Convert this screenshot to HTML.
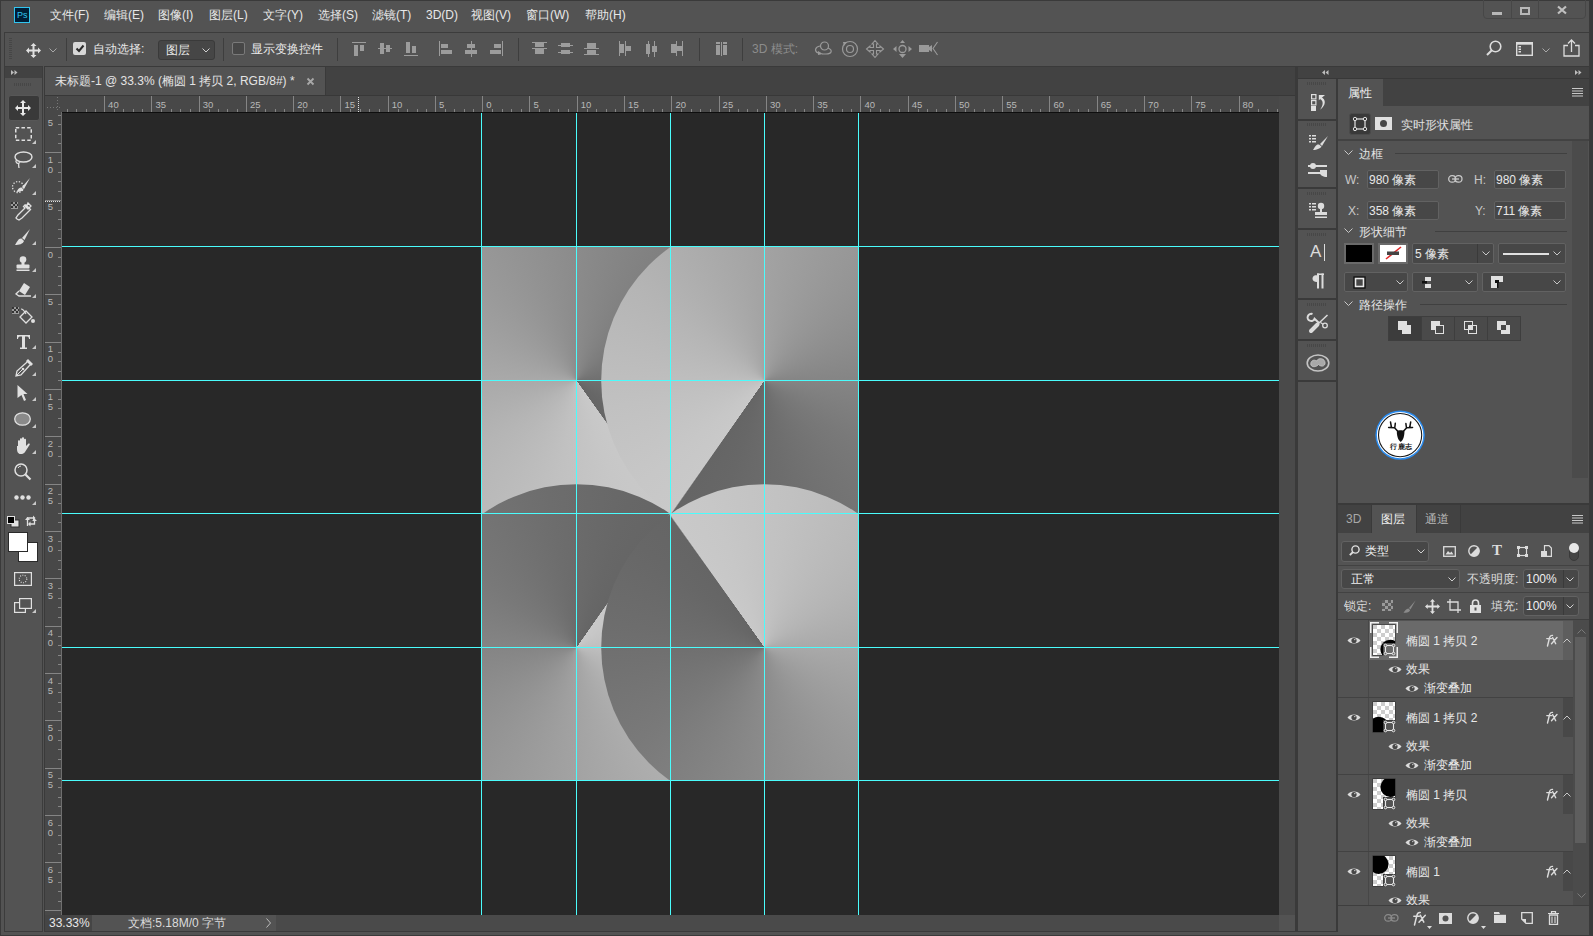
<!DOCTYPE html>
<html><head><meta charset="utf-8">
<style>
*{margin:0;padding:0;box-sizing:border-box}
html,body{width:1593px;height:936px;overflow:hidden;background:#535353}
body{font-family:"Liberation Sans",sans-serif;font-size:12px;color:#e8e8e8;position:relative}
.a{position:absolute}
.t{position:absolute;white-space:nowrap;line-height:14px}
svg{position:absolute;overflow:visible}
.ic{fill:#9c9c9c}
.sep{position:absolute;width:1px;background:#3e3e3e}
.rl{position:absolute;font-size:9.5px;color:#b8b8b8;line-height:10px;white-space:nowrap}
.vr{position:absolute;font-size:9.5px;color:#b8b8b8;line-height:10px;width:7px;text-align:center}
.tk{position:absolute;background:#858585}
.gd{position:absolute;background:#4afcfc}
.inp{position:absolute;background:#474747;border:1px solid #626262;border-radius:2px}
.lbl{position:absolute;white-space:nowrap;line-height:14px;color:#dcdcdc}
</style></head><body>
<!-- window frame -->
<div class="a" style="left:0;top:0;width:1593px;height:936px;background:#535353;border:1px solid #3a3a3a;border-right:4px solid #3a3a3a"></div>

<!-- MENU BAR -->
<div class="a" style="left:14px;top:7px;width:16px;height:16px;background:#001e36;border:1px solid #31c5f0"></div>
<div class="t" style="left:17px;top:8px;font-size:9px;color:#31c5f0">Ps</div>
<div class="t" style="left:50px;top:8px">文件(F)</div>
<div class="t" style="left:104px;top:8px">编辑(E)</div>
<div class="t" style="left:158px;top:8px">图像(I)</div>
<div class="t" style="left:209px;top:8px">图层(L)</div>
<div class="t" style="left:263px;top:8px">文字(Y)</div>
<div class="t" style="left:318px;top:8px">选择(S)</div>
<div class="t" style="left:372px;top:8px">滤镜(T)</div>
<div class="t" style="left:426px;top:8px">3D(D)</div>
<div class="t" style="left:471px;top:8px">视图(V)</div>
<div class="t" style="left:526px;top:8px">窗口(W)</div>
<div class="t" style="left:585px;top:8px">帮助(H)</div>
<!-- window controls -->
<div class="a" style="left:1483px;top:-1px;width:103px;height:20px;border:1px solid #474747;border-radius:0 0 4px 4px"></div>
<div class="a" style="left:1511px;top:0;width:1px;height:18px;background:#474747"></div>
<div class="a" style="left:1538px;top:0;width:1px;height:18px;background:#474747"></div>
<div class="a" style="left:1492px;top:12px;width:10px;height:3px;background:#b8b8b8"></div>
<div class="a" style="left:1520px;top:7px;width:10px;height:8px;border:2px solid #b8b8b8"></div>
<svg style="left:1557px;top:6px" width="10" height="8"><path d="M1 0.5 L9 7.5 M9 0.5 L1 7.5" stroke="#c0c0c0" stroke-width="2.2"/></svg>

<!-- OPTIONS BAR -->
<div class="a" style="left:4px;top:32px;width:1585px;height:34px;background:#535353;border-top:1px solid #3c3c3c;border-left:1px solid #3c3c3c"></div>
<div class="a" style="left:9px;top:38px;width:3px;height:21px;background:repeating-linear-gradient(#464646 0 1px,transparent 1px 2px)"></div>
<svg style="left:26px;top:43px" width="15" height="15"><path d="M7.5 0 L10.5 3 H8.5 V6.5 H12 V4.5 L15 7.5 L12 10.5 V8.5 H8.5 V12 H10.5 L7.5 15 L4.5 12 H6.5 V8.5 H3 V10.5 L0 7.5 L3 4.5 V6.5 H6.5 V3 H4.5 Z" fill="#e0e0e0"/></svg>
<svg style="left:49px;top:48px" width="8" height="5"><path d="M0.5 0.5 L4 4 L7.5 0.5" stroke="#a8a8a8" fill="none"/></svg>
<div class="sep" style="left:66px;top:38px;height:23px"></div>
<div class="a" style="left:73px;top:42px;width:13px;height:13px;background:#d8d8d8;border-radius:2px"></div>
<svg style="left:75px;top:44px" width="10" height="9"><path d="M1.5 4.5 L4 7 L8.5 1.5" stroke="#2a2a2a" stroke-width="2" fill="none"/></svg>
<div class="t" style="left:93px;top:42px">自动选择:</div>
<div class="a" style="left:158px;top:40px;width:57px;height:20px;background:#464646;border:1px solid #3a3a3a;border-radius:3px"></div>
<div class="t" style="left:166px;top:43px">图层</div>
<svg style="left:202px;top:48px" width="8" height="5"><path d="M0.5 0.5 L4 4 L7.5 0.5" stroke="#d0d0d0" fill="none"/></svg>
<div class="sep" style="left:223px;top:38px;height:23px"></div>
<div class="a" style="left:232px;top:42px;width:13px;height:13px;background:#474747;border:1px solid #7a7a7a;border-radius:2px"></div>
<div class="t" style="left:251px;top:42px">显示变换控件</div>
<div class="sep" style="left:337px;top:38px;height:23px"></div>
<!-- align icons -->
<svg style="left:352px;top:42px" width="14" height="14"><rect x="0" y="0" width="14" height="1" class="ic"/><rect x="2" y="3" width="4" height="11" class="ic"/><rect x="8" y="3" width="4" height="6" class="ic"/></svg>
<svg style="left:378px;top:42px" width="14" height="14"><rect x="0" y="6" width="14" height="1" class="ic"/><rect x="2" y="1" width="4" height="11" class="ic"/><rect x="8" y="3" width="4" height="7" class="ic"/></svg>
<svg style="left:404px;top:42px" width="14" height="14"><rect x="0" y="13" width="14" height="1" class="ic"/><rect x="2" y="0" width="4" height="11" class="ic"/><rect x="8" y="4" width="4" height="7" class="ic"/></svg>
<svg style="left:439px;top:41px" width="14" height="15"><rect x="0" y="0" width="1" height="15" class="ic"/><rect x="2" y="3" width="7" height="4" class="ic"/><rect x="2" y="9" width="11" height="4" class="ic"/></svg>
<svg style="left:465px;top:41px" width="14" height="16"><rect x="6" y="0" width="1" height="16" class="ic"/><rect x="2" y="3" width="8" height="4" class="ic"/><rect x="0" y="9" width="12" height="4" class="ic"/></svg>
<svg style="left:490px;top:41px" width="14" height="15"><rect x="12" y="0" width="1" height="15" class="ic"/><rect x="4" y="3" width="7" height="4" class="ic"/><rect x="0" y="9" width="11" height="4" class="ic"/></svg>
<div class="sep" style="left:518px;top:38px;height:23px"></div>
<svg style="left:532px;top:42px" width="16" height="14"><rect x="0" y="0" width="15" height="1" class="ic"/><rect x="3" y="1" width="9" height="4" class="ic"/><rect x="0" y="6" width="15" height="1" class="ic"/><rect x="3" y="7" width="9" height="5" class="ic"/></svg>
<svg style="left:558px;top:42px" width="16" height="14"><rect x="3" y="1" width="9" height="4" class="ic"/><rect x="0" y="3" width="15" height="1" class="ic"/><rect x="3" y="8" width="9" height="4" class="ic"/><rect x="0" y="10" width="15" height="1" class="ic"/></svg>
<svg style="left:584px;top:42px" width="16" height="14"><rect x="3" y="1" width="9" height="5" class="ic"/><rect x="0" y="6" width="15" height="1" class="ic"/><rect x="3" y="8" width="9" height="4" class="ic"/><rect x="0" y="12" width="15" height="1" class="ic"/></svg>
<svg style="left:619px;top:41px" width="14" height="16"><rect x="0" y="0" width="1" height="15" class="ic"/><rect x="1" y="3" width="4" height="9" class="ic"/><rect x="6" y="0" width="1" height="15" class="ic"/><rect x="7" y="5" width="5" height="5" class="ic"/></svg>
<svg style="left:645px;top:41px" width="14" height="16"><rect x="1" y="3" width="4" height="10" class="ic"/><rect x="3" y="0" width="1" height="16" class="ic"/><rect x="7" y="5" width="5" height="6" class="ic"/><rect x="9" y="0" width="1" height="16" class="ic"/></svg>
<svg style="left:671px;top:41px" width="14" height="16"><rect x="0" y="3" width="5" height="9" class="ic"/><rect x="5" y="0" width="1" height="15" class="ic"/><rect x="6" y="5" width="5" height="5" class="ic"/><rect x="11" y="0" width="1" height="15" class="ic"/></svg>
<div class="sep" style="left:699px;top:38px;height:23px"></div>
<svg style="left:716px;top:42px" width="12" height="14"><rect x="0" y="3" width="4" height="10" class="ic"/><rect x="0" y="0" width="4" height="2" class="ic"/><rect x="5" y="0" width="1" height="14" class="ic"/><rect x="7" y="3" width="4" height="10" class="ic"/><rect x="7" y="0" width="4" height="2" class="ic"/></svg>
<div class="sep" style="left:742px;top:38px;height:23px"></div>
<div class="t" style="left:752px;top:42px;color:#8c8c8c">3D 模式:</div>
<!-- 3d icons -->
<svg style="left:814px;top:40px" width="20" height="18"><circle cx="10.5" cy="6" r="4" fill="none" stroke="#9a9a9a" stroke-width="1.2"/><path d="M6 6 C1 7 0 11 4 13 M14 8 C19 10 18 14 12 14 H8" fill="none" stroke="#9a9a9a" stroke-width="1.2"/><path d="M4 11 L9 14 L4 15 Z" fill="#9a9a9a"/></svg>
<svg style="left:841px;top:40px" width="18" height="18"><circle cx="9" cy="9" r="7.5" fill="none" stroke="#9a9a9a" stroke-width="1.2"/><circle cx="9" cy="9" r="3.5" fill="none" stroke="#9a9a9a" stroke-width="1.2"/><path d="M2 2 L6 2 L3 6 Z" fill="#9a9a9a"/></svg>
<svg style="left:866px;top:40px" width="18" height="18"><path d="M9 0.5 L12 4 H10.5 V7.5 H14 V6 L17.5 9 L14 12 V10.5 H10.5 V14 H12 L9 17.5 L6 14 H7.5 V10.5 H4 V12 L0.5 9 L4 6 V7.5 H7.5 V4 H6 Z" fill="none" stroke="#9a9a9a" stroke-width="1.1"/></svg>
<svg style="left:893px;top:40px" width="19" height="18"><circle cx="9.5" cy="9" r="3.5" fill="none" stroke="#9a9a9a" stroke-width="1.3"/><path d="M9.5 0 L12 3 H7 Z M9.5 18 L13 14 H6 Z M0 9 L3.5 6 V12 Z M19 9 L15.5 6 V12 Z" fill="#9a9a9a"/></svg>
<svg style="left:919px;top:41px" width="20" height="16"><rect x="0" y="4" width="10" height="7" fill="#9a9a9a"/><path d="M10 6 L13 4 V11 L10 9 Z" fill="#9a9a9a"/><path d="M18.5 1 L14 7.5 L18.5 14" fill="none" stroke="#9a9a9a" stroke-width="1.1"/></svg>
<!-- right options icons -->
<svg style="left:1486px;top:40px" width="16" height="17"><circle cx="9.5" cy="6.5" r="5.3" fill="none" stroke="#dcdcdc" stroke-width="1.6"/><path d="M5.8 10.2 L1 15" stroke="#dcdcdc" stroke-width="2"/></svg>
<svg style="left:1516px;top:42px" width="17" height="14"><rect x="0.7" y="0.7" width="15.6" height="12.6" fill="none" stroke="#dcdcdc" stroke-width="1.4"/><rect x="0.7" y="0.7" width="15.6" height="2" fill="#dcdcdc"/><rect x="2.5" y="4" width="2.5" height="1.5" fill="#dcdcdc"/><rect x="2.5" y="6.5" width="2.5" height="1.5" fill="#dcdcdc"/><rect x="2.5" y="9" width="2.5" height="1.5" fill="#dcdcdc"/></svg>
<svg style="left:1542px;top:48px" width="8" height="5"><path d="M0.5 0.5 L4 4 L7.5 0.5" stroke="#a8a8a8" fill="none"/></svg>
<svg style="left:1563px;top:39px" width="17" height="18"><path d="M5 6.5 H1 V17 H16 V6.5 H12" fill="none" stroke="#dcdcdc" stroke-width="1.3"/><path d="M8.5 13 V1 M5 4.5 L8.5 1 L12 4.5" fill="none" stroke="#dcdcdc" stroke-width="1.3"/></svg>


<!-- LEFT TOOLBAR -->
<div class="a" style="left:4px;top:66px;width:39px;height:866px;background:#535353;border:1px solid #3c3c3c"></div>
<div class="a" style="left:5px;top:67px;width:37px;height:11px;background:#424242"></div>
<svg style="left:11px;top:70px" width="7" height="5"><path d="M0 0 L3 2.5 L0 5 Z M3.5 0 L6.5 2.5 L3.5 5 Z" fill="#bdbdbd"/></svg>
<div class="a" style="left:14px;top:83px;width:17px;height:3px;background:repeating-linear-gradient(90deg,#474747 0 1px,transparent 1px 2px)"></div>
<div class="a" style="left:8px;top:95px;width:32px;height:26px;background:#393939;border-radius:3px;border:1px solid #575757"></div>
<!-- DOCUMENT WINDOW -->
<div class="a" style="left:44px;top:66px;width:1252px;height:866px;background:#424242;border:1px solid #3a3a3a"></div>
<div class="a" style="left:45px;top:67px;width:280px;height:28px;background:#535353"></div>
<div class="t" style="left:55px;top:74px;color:#e4e4e4">未标题-1 @ 33.3% (椭圆 1 拷贝 2, RGB/8#) *</div>
<svg style="left:307px;top:78px" width="7" height="7"><path d="M0.5 0.5 L6.5 6.5 M6.5 0.5 L0.5 6.5" stroke="#a8a8a8" stroke-width="1.8"/></svg>
<div class="a" style="left:45px;top:95px;width:1250px;height:1px;background:#383838"></div>
<div class="a" style="left:45px;top:96px;width:1234px;height:16px;background:#484848"></div>
<div class="a" style="left:45px;top:112px;width:17px;height:803px;background:#484848"></div>
<div class="a" style="left:61px;top:112px;width:1px;height:803px;background:#6e6e6e"></div>
<div class="a" style="left:1279px;top:96px;width:16px;height:16px;background:#4a4a4a"></div>
<div class="a" style="left:47px;top:107px;width:14px;height:1px;background:repeating-linear-gradient(90deg,#777 0 1px,transparent 1px 3px)"></div>
<div class="a" style="left:57px;top:97px;width:1px;height:14px;background:repeating-linear-gradient(#777 0 1px,transparent 1px 3px)"></div>
<div class="tk" style="left:67px;top:109px;width:1px;height:3px"></div>
<div class="tk" style="left:76px;top:109px;width:1px;height:3px"></div>
<div class="tk" style="left:86px;top:109px;width:1px;height:3px"></div>
<div class="tk" style="left:95px;top:109px;width:1px;height:3px"></div>
<div class="tk" style="left:104px;top:96px;width:1px;height:16px"></div>
<div class="rl" style="left:108.1px;top:100px">40</div>
<div class="tk" style="left:114px;top:109px;width:1px;height:3px"></div>
<div class="tk" style="left:123px;top:109px;width:1px;height:3px"></div>
<div class="tk" style="left:133px;top:109px;width:1px;height:3px"></div>
<div class="tk" style="left:142px;top:109px;width:1px;height:3px"></div>
<div class="tk" style="left:151px;top:96px;width:1px;height:16px"></div>
<div class="rl" style="left:155.4px;top:100px">35</div>
<div class="tk" style="left:161px;top:109px;width:1px;height:3px"></div>
<div class="tk" style="left:171px;top:109px;width:1px;height:3px"></div>
<div class="tk" style="left:180px;top:109px;width:1px;height:3px"></div>
<div class="tk" style="left:190px;top:109px;width:1px;height:3px"></div>
<div class="tk" style="left:199px;top:96px;width:1px;height:16px"></div>
<div class="rl" style="left:202.7px;top:100px">30</div>
<div class="tk" style="left:209px;top:109px;width:1px;height:3px"></div>
<div class="tk" style="left:218px;top:109px;width:1px;height:3px"></div>
<div class="tk" style="left:227px;top:109px;width:1px;height:3px"></div>
<div class="tk" style="left:237px;top:109px;width:1px;height:3px"></div>
<div class="tk" style="left:246px;top:96px;width:1px;height:16px"></div>
<div class="rl" style="left:249.9px;top:100px">25</div>
<div class="tk" style="left:256px;top:109px;width:1px;height:3px"></div>
<div class="tk" style="left:265px;top:109px;width:1px;height:3px"></div>
<div class="tk" style="left:275px;top:109px;width:1px;height:3px"></div>
<div class="tk" style="left:284px;top:109px;width:1px;height:3px"></div>
<div class="tk" style="left:293px;top:96px;width:1px;height:16px"></div>
<div class="rl" style="left:297.2px;top:100px">20</div>
<div class="tk" style="left:303px;top:109px;width:1px;height:3px"></div>
<div class="tk" style="left:313px;top:109px;width:1px;height:3px"></div>
<div class="tk" style="left:322px;top:109px;width:1px;height:3px"></div>
<div class="tk" style="left:331px;top:109px;width:1px;height:3px"></div>
<div class="tk" style="left:340px;top:96px;width:1px;height:16px"></div>
<div class="rl" style="left:344.5px;top:100px">15</div>
<div class="tk" style="left:350px;top:109px;width:1px;height:3px"></div>
<div class="tk" style="left:360px;top:109px;width:1px;height:3px"></div>
<div class="tk" style="left:369px;top:109px;width:1px;height:3px"></div>
<div class="tk" style="left:379px;top:109px;width:1px;height:3px"></div>
<div class="tk" style="left:388px;top:96px;width:1px;height:16px"></div>
<div class="rl" style="left:391.8px;top:100px">10</div>
<div class="tk" style="left:398px;top:109px;width:1px;height:3px"></div>
<div class="tk" style="left:407px;top:109px;width:1px;height:3px"></div>
<div class="tk" style="left:417px;top:109px;width:1px;height:3px"></div>
<div class="tk" style="left:426px;top:109px;width:1px;height:3px"></div>
<div class="tk" style="left:435px;top:96px;width:1px;height:16px"></div>
<div class="rl" style="left:439.0px;top:100px">5</div>
<div class="tk" style="left:445px;top:109px;width:1px;height:3px"></div>
<div class="tk" style="left:454px;top:109px;width:1px;height:3px"></div>
<div class="tk" style="left:464px;top:109px;width:1px;height:3px"></div>
<div class="tk" style="left:473px;top:109px;width:1px;height:3px"></div>
<div class="tk" style="left:482px;top:96px;width:1px;height:16px"></div>
<div class="rl" style="left:486.3px;top:100px">0</div>
<div class="tk" style="left:492px;top:109px;width:1px;height:3px"></div>
<div class="tk" style="left:502px;top:109px;width:1px;height:3px"></div>
<div class="tk" style="left:511px;top:109px;width:1px;height:3px"></div>
<div class="tk" style="left:521px;top:109px;width:1px;height:3px"></div>
<div class="tk" style="left:529px;top:96px;width:1px;height:16px"></div>
<div class="rl" style="left:533.6px;top:100px">5</div>
<div class="tk" style="left:539px;top:109px;width:1px;height:3px"></div>
<div class="tk" style="left:549px;top:109px;width:1px;height:3px"></div>
<div class="tk" style="left:558px;top:109px;width:1px;height:3px"></div>
<div class="tk" style="left:568px;top:109px;width:1px;height:3px"></div>
<div class="tk" style="left:577px;top:96px;width:1px;height:16px"></div>
<div class="rl" style="left:580.8px;top:100px">10</div>
<div class="tk" style="left:587px;top:109px;width:1px;height:3px"></div>
<div class="tk" style="left:596px;top:109px;width:1px;height:3px"></div>
<div class="tk" style="left:606px;top:109px;width:1px;height:3px"></div>
<div class="tk" style="left:615px;top:109px;width:1px;height:3px"></div>
<div class="tk" style="left:624px;top:96px;width:1px;height:16px"></div>
<div class="rl" style="left:628.1px;top:100px">15</div>
<div class="tk" style="left:634px;top:109px;width:1px;height:3px"></div>
<div class="tk" style="left:643px;top:109px;width:1px;height:3px"></div>
<div class="tk" style="left:653px;top:109px;width:1px;height:3px"></div>
<div class="tk" style="left:662px;top:109px;width:1px;height:3px"></div>
<div class="tk" style="left:671px;top:96px;width:1px;height:16px"></div>
<div class="rl" style="left:675.4px;top:100px">20</div>
<div class="tk" style="left:681px;top:109px;width:1px;height:3px"></div>
<div class="tk" style="left:691px;top:109px;width:1px;height:3px"></div>
<div class="tk" style="left:700px;top:109px;width:1px;height:3px"></div>
<div class="tk" style="left:710px;top:109px;width:1px;height:3px"></div>
<div class="tk" style="left:719px;top:96px;width:1px;height:16px"></div>
<div class="rl" style="left:722.6px;top:100px">25</div>
<div class="tk" style="left:729px;top:109px;width:1px;height:3px"></div>
<div class="tk" style="left:738px;top:109px;width:1px;height:3px"></div>
<div class="tk" style="left:747px;top:109px;width:1px;height:3px"></div>
<div class="tk" style="left:757px;top:109px;width:1px;height:3px"></div>
<div class="tk" style="left:766px;top:96px;width:1px;height:16px"></div>
<div class="rl" style="left:769.9px;top:100px">30</div>
<div class="tk" style="left:776px;top:109px;width:1px;height:3px"></div>
<div class="tk" style="left:785px;top:109px;width:1px;height:3px"></div>
<div class="tk" style="left:795px;top:109px;width:1px;height:3px"></div>
<div class="tk" style="left:804px;top:109px;width:1px;height:3px"></div>
<div class="tk" style="left:813px;top:96px;width:1px;height:16px"></div>
<div class="rl" style="left:817.2px;top:100px">35</div>
<div class="tk" style="left:823px;top:109px;width:1px;height:3px"></div>
<div class="tk" style="left:832px;top:109px;width:1px;height:3px"></div>
<div class="tk" style="left:842px;top:109px;width:1px;height:3px"></div>
<div class="tk" style="left:851px;top:109px;width:1px;height:3px"></div>
<div class="tk" style="left:860px;top:96px;width:1px;height:16px"></div>
<div class="rl" style="left:864.5px;top:100px">40</div>
<div class="tk" style="left:870px;top:109px;width:1px;height:3px"></div>
<div class="tk" style="left:880px;top:109px;width:1px;height:3px"></div>
<div class="tk" style="left:889px;top:109px;width:1px;height:3px"></div>
<div class="tk" style="left:899px;top:109px;width:1px;height:3px"></div>
<div class="tk" style="left:908px;top:96px;width:1px;height:16px"></div>
<div class="rl" style="left:911.7px;top:100px">45</div>
<div class="tk" style="left:918px;top:109px;width:1px;height:3px"></div>
<div class="tk" style="left:927px;top:109px;width:1px;height:3px"></div>
<div class="tk" style="left:936px;top:109px;width:1px;height:3px"></div>
<div class="tk" style="left:946px;top:109px;width:1px;height:3px"></div>
<div class="tk" style="left:955px;top:96px;width:1px;height:16px"></div>
<div class="rl" style="left:959.0px;top:100px">50</div>
<div class="tk" style="left:965px;top:109px;width:1px;height:3px"></div>
<div class="tk" style="left:974px;top:109px;width:1px;height:3px"></div>
<div class="tk" style="left:984px;top:109px;width:1px;height:3px"></div>
<div class="tk" style="left:993px;top:109px;width:1px;height:3px"></div>
<div class="tk" style="left:1002px;top:96px;width:1px;height:16px"></div>
<div class="rl" style="left:1006.3px;top:100px">55</div>
<div class="tk" style="left:1012px;top:109px;width:1px;height:3px"></div>
<div class="tk" style="left:1022px;top:109px;width:1px;height:3px"></div>
<div class="tk" style="left:1031px;top:109px;width:1px;height:3px"></div>
<div class="tk" style="left:1040px;top:109px;width:1px;height:3px"></div>
<div class="tk" style="left:1049px;top:96px;width:1px;height:16px"></div>
<div class="rl" style="left:1053.5px;top:100px">60</div>
<div class="tk" style="left:1059px;top:109px;width:1px;height:3px"></div>
<div class="tk" style="left:1069px;top:109px;width:1px;height:3px"></div>
<div class="tk" style="left:1078px;top:109px;width:1px;height:3px"></div>
<div class="tk" style="left:1088px;top:109px;width:1px;height:3px"></div>
<div class="tk" style="left:1097px;top:96px;width:1px;height:16px"></div>
<div class="rl" style="left:1100.8px;top:100px">65</div>
<div class="tk" style="left:1107px;top:109px;width:1px;height:3px"></div>
<div class="tk" style="left:1116px;top:109px;width:1px;height:3px"></div>
<div class="tk" style="left:1126px;top:109px;width:1px;height:3px"></div>
<div class="tk" style="left:1135px;top:109px;width:1px;height:3px"></div>
<div class="tk" style="left:1144px;top:96px;width:1px;height:16px"></div>
<div class="rl" style="left:1148.1px;top:100px">70</div>
<div class="tk" style="left:1154px;top:109px;width:1px;height:3px"></div>
<div class="tk" style="left:1163px;top:109px;width:1px;height:3px"></div>
<div class="tk" style="left:1173px;top:109px;width:1px;height:3px"></div>
<div class="tk" style="left:1182px;top:109px;width:1px;height:3px"></div>
<div class="tk" style="left:1191px;top:96px;width:1px;height:16px"></div>
<div class="rl" style="left:1195.3px;top:100px">75</div>
<div class="tk" style="left:1201px;top:109px;width:1px;height:3px"></div>
<div class="tk" style="left:1211px;top:109px;width:1px;height:3px"></div>
<div class="tk" style="left:1220px;top:109px;width:1px;height:3px"></div>
<div class="tk" style="left:1230px;top:109px;width:1px;height:3px"></div>
<div class="tk" style="left:1239px;top:96px;width:1px;height:16px"></div>
<div class="rl" style="left:1242.6px;top:100px">80</div>
<div class="tk" style="left:1248px;top:109px;width:1px;height:3px"></div>
<div class="tk" style="left:1258px;top:109px;width:1px;height:3px"></div>
<div class="tk" style="left:1267px;top:109px;width:1px;height:3px"></div>
<div class="tk" style="left:1277px;top:109px;width:1px;height:3px"></div>
<div class="tk" style="left:58px;top:115px;width:3px;height:1px"></div>
<div class="tk" style="left:58px;top:124px;width:3px;height:1px"></div>
<div class="tk" style="left:58px;top:134px;width:3px;height:1px"></div>
<div class="tk" style="left:58px;top:143px;width:3px;height:1px"></div>
<div class="vr" style="left:47px;top:117.7px">5</div>
<div class="tk" style="left:45px;top:152px;width:16px;height:1px"></div>
<div class="tk" style="left:58px;top:162px;width:3px;height:1px"></div>
<div class="tk" style="left:58px;top:172px;width:3px;height:1px"></div>
<div class="tk" style="left:58px;top:181px;width:3px;height:1px"></div>
<div class="tk" style="left:58px;top:191px;width:3px;height:1px"></div>
<div class="vr" style="left:47px;top:155.0px">1</div>
<div class="vr" style="left:47px;top:165.0px">0</div>
<div class="tk" style="left:45px;top:200px;width:16px;height:1px"></div>
<div class="tk" style="left:58px;top:210px;width:3px;height:1px"></div>
<div class="tk" style="left:58px;top:219px;width:3px;height:1px"></div>
<div class="tk" style="left:58px;top:229px;width:3px;height:1px"></div>
<div class="tk" style="left:58px;top:238px;width:3px;height:1px"></div>
<div class="vr" style="left:47px;top:202.4px">5</div>
<div class="tk" style="left:45px;top:247px;width:16px;height:1px"></div>
<div class="tk" style="left:58px;top:257px;width:3px;height:1px"></div>
<div class="tk" style="left:58px;top:266px;width:3px;height:1px"></div>
<div class="tk" style="left:58px;top:276px;width:3px;height:1px"></div>
<div class="tk" style="left:58px;top:285px;width:3px;height:1px"></div>
<div class="vr" style="left:47px;top:249.7px">0</div>
<div class="tk" style="left:45px;top:294px;width:16px;height:1px"></div>
<div class="tk" style="left:58px;top:304px;width:3px;height:1px"></div>
<div class="tk" style="left:58px;top:314px;width:3px;height:1px"></div>
<div class="tk" style="left:58px;top:323px;width:3px;height:1px"></div>
<div class="tk" style="left:58px;top:333px;width:3px;height:1px"></div>
<div class="vr" style="left:47px;top:297.0px">5</div>
<div class="tk" style="left:45px;top:342px;width:16px;height:1px"></div>
<div class="tk" style="left:58px;top:352px;width:3px;height:1px"></div>
<div class="tk" style="left:58px;top:361px;width:3px;height:1px"></div>
<div class="tk" style="left:58px;top:371px;width:3px;height:1px"></div>
<div class="tk" style="left:58px;top:380px;width:3px;height:1px"></div>
<div class="vr" style="left:47px;top:344.4px">1</div>
<div class="vr" style="left:47px;top:354.4px">0</div>
<div class="tk" style="left:45px;top:389px;width:16px;height:1px"></div>
<div class="tk" style="left:58px;top:399px;width:3px;height:1px"></div>
<div class="tk" style="left:58px;top:408px;width:3px;height:1px"></div>
<div class="tk" style="left:58px;top:418px;width:3px;height:1px"></div>
<div class="tk" style="left:58px;top:427px;width:3px;height:1px"></div>
<div class="vr" style="left:47px;top:391.7px">1</div>
<div class="vr" style="left:47px;top:401.7px">5</div>
<div class="tk" style="left:45px;top:436px;width:16px;height:1px"></div>
<div class="tk" style="left:58px;top:446px;width:3px;height:1px"></div>
<div class="tk" style="left:58px;top:456px;width:3px;height:1px"></div>
<div class="tk" style="left:58px;top:465px;width:3px;height:1px"></div>
<div class="tk" style="left:58px;top:475px;width:3px;height:1px"></div>
<div class="vr" style="left:47px;top:439.1px">2</div>
<div class="vr" style="left:47px;top:449.1px">0</div>
<div class="tk" style="left:45px;top:484px;width:16px;height:1px"></div>
<div class="tk" style="left:58px;top:494px;width:3px;height:1px"></div>
<div class="tk" style="left:58px;top:503px;width:3px;height:1px"></div>
<div class="tk" style="left:58px;top:513px;width:3px;height:1px"></div>
<div class="tk" style="left:58px;top:522px;width:3px;height:1px"></div>
<div class="vr" style="left:47px;top:486.4px">2</div>
<div class="vr" style="left:47px;top:496.4px">5</div>
<div class="tk" style="left:45px;top:531px;width:16px;height:1px"></div>
<div class="tk" style="left:58px;top:541px;width:3px;height:1px"></div>
<div class="tk" style="left:58px;top:550px;width:3px;height:1px"></div>
<div class="tk" style="left:58px;top:560px;width:3px;height:1px"></div>
<div class="tk" style="left:58px;top:569px;width:3px;height:1px"></div>
<div class="vr" style="left:47px;top:533.7px">3</div>
<div class="vr" style="left:47px;top:543.7px">0</div>
<div class="tk" style="left:45px;top:578px;width:16px;height:1px"></div>
<div class="tk" style="left:58px;top:588px;width:3px;height:1px"></div>
<div class="tk" style="left:58px;top:598px;width:3px;height:1px"></div>
<div class="tk" style="left:58px;top:607px;width:3px;height:1px"></div>
<div class="tk" style="left:58px;top:617px;width:3px;height:1px"></div>
<div class="vr" style="left:47px;top:581.1px">3</div>
<div class="vr" style="left:47px;top:591.1px">5</div>
<div class="tk" style="left:45px;top:626px;width:16px;height:1px"></div>
<div class="tk" style="left:58px;top:636px;width:3px;height:1px"></div>
<div class="tk" style="left:58px;top:645px;width:3px;height:1px"></div>
<div class="tk" style="left:58px;top:655px;width:3px;height:1px"></div>
<div class="tk" style="left:58px;top:664px;width:3px;height:1px"></div>
<div class="vr" style="left:47px;top:628.4px">4</div>
<div class="vr" style="left:47px;top:638.4px">0</div>
<div class="tk" style="left:45px;top:673px;width:16px;height:1px"></div>
<div class="tk" style="left:58px;top:683px;width:3px;height:1px"></div>
<div class="tk" style="left:58px;top:692px;width:3px;height:1px"></div>
<div class="tk" style="left:58px;top:702px;width:3px;height:1px"></div>
<div class="tk" style="left:58px;top:711px;width:3px;height:1px"></div>
<div class="vr" style="left:47px;top:675.8px">4</div>
<div class="vr" style="left:47px;top:685.8px">5</div>
<div class="tk" style="left:45px;top:720px;width:16px;height:1px"></div>
<div class="tk" style="left:58px;top:730px;width:3px;height:1px"></div>
<div class="tk" style="left:58px;top:740px;width:3px;height:1px"></div>
<div class="tk" style="left:58px;top:749px;width:3px;height:1px"></div>
<div class="tk" style="left:58px;top:759px;width:3px;height:1px"></div>
<div class="vr" style="left:47px;top:723.1px">5</div>
<div class="vr" style="left:47px;top:733.1px">0</div>
<div class="tk" style="left:45px;top:768px;width:16px;height:1px"></div>
<div class="tk" style="left:58px;top:778px;width:3px;height:1px"></div>
<div class="tk" style="left:58px;top:787px;width:3px;height:1px"></div>
<div class="tk" style="left:58px;top:797px;width:3px;height:1px"></div>
<div class="tk" style="left:58px;top:806px;width:3px;height:1px"></div>
<div class="vr" style="left:47px;top:770.4px">5</div>
<div class="vr" style="left:47px;top:780.4px">5</div>
<div class="tk" style="left:45px;top:815px;width:16px;height:1px"></div>
<div class="tk" style="left:58px;top:825px;width:3px;height:1px"></div>
<div class="tk" style="left:58px;top:835px;width:3px;height:1px"></div>
<div class="tk" style="left:58px;top:844px;width:3px;height:1px"></div>
<div class="tk" style="left:58px;top:853px;width:3px;height:1px"></div>
<div class="vr" style="left:47px;top:817.8px">6</div>
<div class="vr" style="left:47px;top:827.8px">0</div>
<div class="tk" style="left:45px;top:862px;width:16px;height:1px"></div>
<div class="tk" style="left:58px;top:872px;width:3px;height:1px"></div>
<div class="tk" style="left:58px;top:882px;width:3px;height:1px"></div>
<div class="tk" style="left:58px;top:891px;width:3px;height:1px"></div>
<div class="tk" style="left:58px;top:901px;width:3px;height:1px"></div>
<div class="vr" style="left:47px;top:865.1px">6</div>
<div class="vr" style="left:47px;top:875.1px">5</div>
<div class="tk" style="left:45px;top:910px;width:16px;height:1px"></div>
<div class="vr" style="left:47px;top:912.5px">7</div>
<div class="a" style="left:358px;top:97px;width:1px;height:15px;background:repeating-linear-gradient(#e0e0e0 0 1px,transparent 1px 2px)"></div>
<div class="a" style="left:325px;top:67px;width:1px;height:28px;background:#3a3a3a"></div>
<div class="a" style="left:45px;top:201px;width:16px;height:1px;background:repeating-linear-gradient(90deg,#e0e0e0 0 1px,transparent 1px 2px)"></div>
<!-- canvas -->
<div class="a" style="left:62px;top:112px;width:1217px;height:803px;background:#282828;overflow:hidden">
  <div class="a" style="left:420px;top:135px;width:376px;height:533px;overflow:hidden">
    <div class="a" style="left:0;top:0;width:376px;height:533px;background:conic-gradient(from 144.75deg at 94.5px 133.5px,#c9c9c9 0.0deg,#c7c7c7 15.0deg,#c4c4c4 30.0deg,#c1c1c1 44.9deg,#bdbdbd 59.9deg,#b9b9b9 74.9deg,#b5b5b5 89.9deg,#b0b0b0 104.9deg,#ababab 119.8deg,#a6a6a6 134.8deg,#a1a1a1 149.8deg,#9c9c9c 164.8deg,#979797 179.8deg,#929292 194.7deg,#8d8d8d 209.7deg,#888888 224.7deg,#838383 239.7deg,#7e7e7e 254.6deg,#797979 269.6deg,#757575 284.6deg,#717171 299.6deg,#6d6d6d 314.6deg,#6a6a6a 329.5deg,#676767 344.5deg,#656565 359.5deg,#c9c9c9 360deg);clip-path:circle(163.3px at 94.5px 133.5px)"></div>
    <div class="a" style="left:0;top:0;width:376px;height:533px;background:conic-gradient(from 215.25deg at 282.5px 133.5px,#c9c9c9 0.0deg,#c7c7c7 15.0deg,#c4c4c4 30.0deg,#c1c1c1 44.9deg,#bdbdbd 59.9deg,#b9b9b9 74.9deg,#b5b5b5 89.9deg,#b0b0b0 104.9deg,#ababab 119.8deg,#a6a6a6 134.8deg,#a1a1a1 149.8deg,#9c9c9c 164.8deg,#979797 179.8deg,#929292 194.7deg,#8d8d8d 209.7deg,#888888 224.7deg,#838383 239.7deg,#7e7e7e 254.6deg,#797979 269.6deg,#757575 284.6deg,#717171 299.6deg,#6d6d6d 314.6deg,#6a6a6a 329.5deg,#676767 344.5deg,#656565 359.5deg,#c9c9c9 360deg);clip-path:circle(163.3px at 282.5px 133.5px)"></div>
    <div class="a" style="left:0;top:0;width:376px;height:533px;background:conic-gradient(from 35.25deg at 94.5px 400.5px,#c9c9c9 0.0deg,#c7c7c7 15.0deg,#c4c4c4 30.0deg,#c1c1c1 44.9deg,#bdbdbd 59.9deg,#b9b9b9 74.9deg,#b5b5b5 89.9deg,#b0b0b0 104.9deg,#ababab 119.8deg,#a6a6a6 134.8deg,#a1a1a1 149.8deg,#9c9c9c 164.8deg,#979797 179.8deg,#929292 194.7deg,#8d8d8d 209.7deg,#888888 224.7deg,#838383 239.7deg,#7e7e7e 254.6deg,#797979 269.6deg,#757575 284.6deg,#717171 299.6deg,#6d6d6d 314.6deg,#6a6a6a 329.5deg,#676767 344.5deg,#656565 359.5deg,#c9c9c9 360deg);clip-path:circle(163.3px at 94.5px 400.5px)"></div>
    <div class="a" style="left:0;top:0;width:376px;height:533px;background:conic-gradient(from 324.75deg at 282.5px 400.5px,#c9c9c9 0.0deg,#c7c7c7 15.0deg,#c4c4c4 30.0deg,#c1c1c1 44.9deg,#bdbdbd 59.9deg,#b9b9b9 74.9deg,#b5b5b5 89.9deg,#b0b0b0 104.9deg,#ababab 119.8deg,#a6a6a6 134.8deg,#a1a1a1 149.8deg,#9c9c9c 164.8deg,#979797 179.8deg,#929292 194.7deg,#8d8d8d 209.7deg,#888888 224.7deg,#838383 239.7deg,#7e7e7e 254.6deg,#797979 269.6deg,#757575 284.6deg,#717171 299.6deg,#6d6d6d 314.6deg,#6a6a6a 329.5deg,#676767 344.5deg,#656565 359.5deg,#c9c9c9 360deg);clip-path:circle(163.3px at 282.5px 400.5px)"></div>
  </div>
  <div class="gd" style="left:419px;top:0;width:1px;height:803px"></div>
  <div class="gd" style="left:514px;top:0;width:1px;height:803px"></div>
  <div class="gd" style="left:608px;top:0;width:1px;height:803px"></div>
  <div class="gd" style="left:702px;top:0;width:1px;height:803px"></div>
  <div class="gd" style="left:796px;top:0;width:1px;height:803px"></div>
  <div class="gd" style="left:0;top:134px;width:1217px;height:1px"></div>
  <div class="gd" style="left:0;top:268px;width:1217px;height:1px"></div>
  <div class="gd" style="left:0;top:401px;width:1217px;height:1px"></div>
  <div class="gd" style="left:0;top:535px;width:1217px;height:1px"></div>
  <div class="gd" style="left:0;top:668px;width:1217px;height:1px"></div>
</div>
<div class="a" style="left:62px;top:112px;width:1217px;height:1px;background:#0e0e0e"></div>
<!-- scrollbar col -->
<div class="a" style="left:1279px;top:112px;width:16px;height:803px;background:#4a4a4a"></div>
<!-- status bar -->
<div class="a" style="left:45px;top:915px;width:1250px;height:16px;background:#4a4a4a"></div>
<div class="a" style="left:45px;top:915px;width:47px;height:16px;background:#454545"></div>
<div class="a" style="left:92px;top:915px;width:184px;height:16px;background:#535353"></div>
<div class="t" style="left:49px;top:916px;font-size:12px;color:#e8e8e8">33.33%</div>
<div class="t" style="left:128px;top:916px;font-size:12px;color:#dcdcdc">文档:5.18M/0 字节</div>
<div class="a" style="left:1279px;top:915px;width:16px;height:16px;background:#535353"></div>
<svg style="left:266px;top:918px" width="5" height="10"><path d="M0.5 0.5 L4.5 5 L0.5 9.5" stroke="#bdbdbd" fill="none"/></svg>

<!-- TOOL ICONS -->
<svg style="left:15px;top:100px" width="16" height="16"><path d="M8 0 L11 3 H9 V7 H13 V5 L16 8 L13 11 V9 H9 V13 H11 L8 16 L5 13 H7 V9 H3 V11 L0 8 L3 5 V7 H7 V3 H5 Z" fill="#e8e8e8"/></svg>
<svg style="left:15px;top:127px" width="22" height="17"><rect x="0.75" y="0.75" width="15.5" height="12.5" fill="none" stroke="#e0e0e0" stroke-width="1.5" stroke-dasharray="3.5 2.2"/><path d="M21 13 V17 H17 Z" fill="#c8c8c8"/></svg>
<svg style="left:14px;top:151px" width="23" height="18"><ellipse cx="9.5" cy="6" rx="8.5" ry="5" fill="none" stroke="#e0e0e0" stroke-width="1.4"/><path d="M2.5 9 C1 11 3 13 5 12 C4 14 5 16 5 17" fill="none" stroke="#e0e0e0" stroke-width="1.3"/><path d="M22 13 V17 H18 Z" fill="#c8c8c8"/></svg>
<svg style="left:12px;top:177px" width="25" height="19"><circle cx="6" cy="10" r="5.5" fill="none" stroke="#e0e0e0" stroke-width="1.3" stroke-dasharray="1.3 1.6"/><path d="M18 1 L10 10 L12 12 Z" fill="#e0e0e0"/><path d="M9.5 10.5 C7 10 5.5 13 4.5 15 C8 15 11 14 11.5 12.5 Z" fill="#e0e0e0"/><path d="M24 14 V18 H20 Z" fill="#c8c8c8"/></svg>
<svg style="left:11px;top:202px" width="22" height="20"><rect x="0" y="0" width="7" height="7" fill="#9a9a9a"/><path d="M0 0h2v2H0zM4 0h2v2H4zM2 2h2v2H2zM6 2h1v2H6zM0 4h2v2H0zM4 4h2v2H4z" fill="#333"/><path d="M17 1 L20 4 L18 6 L19.5 7.5 L18 9 L11 16 L8 18 L6 17 L5 16 L7 13 L14 6 L12.5 4.5 L14 3 L15.5 4.5 Z" fill="none" stroke="#e0e0e0" stroke-width="1.3"/><path d="M15 2 L19 6 L17 8 L13 4 Z" fill="#e0e0e0"/></svg>
<svg style="left:14px;top:229px" width="23" height="17"><path d="M16 0 L8 9 L10.5 11 Z" fill="#e0e0e0"/><path d="M7.5 9.5 C4.5 9 3 13 1 16 C5 16 9 15 10 12 Z" fill="#e0e0e0"/><path d="M22 12 V16 H18 Z" fill="#c8c8c8"/></svg>
<svg style="left:16px;top:256px" width="21" height="17"><circle cx="7" cy="3.5" r="3.3" fill="#e0e0e0"/><rect x="5.5" y="5" width="3" height="4" fill="#e0e0e0"/><rect x="0.5" y="8.5" width="13" height="4" rx="1" fill="#e0e0e0"/><rect x="0.5" y="13.5" width="13" height="1.5" fill="#e0e0e0"/><path d="M20 12 V16 H16 Z" fill="#c8c8c8"/></svg>
<svg style="left:15px;top:282px" width="22" height="17"><path d="M9 1 L15 5 L10 13 L4 9 Z" fill="#e0e0e0"/><path d="M4 9 L1 12 L4 14 H16" fill="none" stroke="#e0e0e0" stroke-width="1.3"/><path d="M21 12 V16 H17 Z" fill="#c8c8c8"/></svg>
<svg style="left:12px;top:307px" width="24" height="19"><rect x="0" y="0" width="7" height="7" fill="#9a9a9a"/><path d="M0 0h2v2H0zM4 0h2v2H4zM2 2h2v2H2zM6 2h1v2H6zM0 4h2v2H0zM4 4h2v2H4z" fill="#333"/><path d="M8 10 L14 4 L20 10 L14 16 Z" fill="none" stroke="#e0e0e0" stroke-width="1.3"/><path d="M9 2 C11 2 13 5 14 7" fill="none" stroke="#e0e0e0" stroke-width="1.2"/><circle cx="21" cy="14" r="2" fill="#e0e0e0"/></svg>
<svg style="left:17px;top:335px" width="20" height="15"><path d="M0 0 H13 V4 H12 C12 2 11 1.5 9 1.5 H8 V12.5 H10 V14 H3 V12.5 H5 V1.5 H4 C2 1.5 1 2 1 4 H0 Z" fill="#e0e0e0"/><path d="M19 10 V14 H15 Z" fill="#c8c8c8"/></svg>
<svg style="left:15px;top:360px" width="22" height="17"><path d="M13 1 L16 4 L14 6 L6 15 L1 16 L2 11 L11 3 Z" fill="none" stroke="#e0e0e0" stroke-width="1.3"/><path d="M11 1 L13 -1 L18 4 L16 6 Z" fill="#e0e0e0"/><circle cx="8" cy="9" r="1.3" fill="#e0e0e0"/><path d="M1.5 15.5 L7 10" stroke="#e0e0e0" stroke-width="1"/><path d="M21 12 V16 H17 Z" fill="#c8c8c8"/></svg>
<svg style="left:17px;top:385px" width="20" height="17"><path d="M0.5 0 L10.5 9 H6.5 L9 15 L7 16 L4.5 10 L0.5 13 Z" fill="#e0e0e0"/><path d="M19 12 V16 H15 Z" fill="#c8c8c8"/></svg>
<svg style="left:14px;top:412px" width="23" height="17"><ellipse cx="8.5" cy="7" rx="7.8" ry="6.2" fill="#8a8a8a" stroke="#e0e0e0" stroke-width="1.3"/><path d="M22 12 V16 H18 Z" fill="#c8c8c8"/></svg>
<svg style="left:14px;top:437px" width="23" height="18"><path d="M4 9 V4 C4 3 6 3 6 4 V8 V2 C6 1 8 1 8 2 V8 V1 C8 0 10 0 10 1 V8 V2.5 C10 1.5 12 1.5 12 2.5 V9 L14 7 C15 6 16.5 7 15.5 8 L11 15 C10 16.5 8.5 17 7 17 H6.5 C4 17 3 14.5 3 12 V9 Z" fill="#e0e0e0"/><path d="M22 13 V17 H18 Z" fill="#c8c8c8"/></svg>
<svg style="left:14px;top:463px" width="18" height="18"><circle cx="7" cy="7" r="6" fill="none" stroke="#e0e0e0" stroke-width="1.5"/><path d="M11.5 11.5 L16.5 16.5" stroke="#e0e0e0" stroke-width="2.2"/><path d="M4 5 A3.5 3.5 0 0 1 7 3" fill="none" stroke="#e0e0e0" stroke-width="1"/></svg>
<svg style="left:14px;top:494px" width="23" height="12"><circle cx="2.5" cy="3.5" r="2.2" fill="#e0e0e0"/><circle cx="8.5" cy="3.5" r="2.2" fill="#e0e0e0"/><circle cx="14.5" cy="3.5" r="2.2" fill="#e0e0e0"/><path d="M22 7 V11 H18 Z" fill="#c8c8c8"/></svg>
<svg style="left:7px;top:516px" width="13" height="12"><rect x="4" y="4" width="8" height="7" fill="#e0e0e0" stroke="#333" stroke-width="1"/><rect x="0.5" y="0.5" width="7" height="7" fill="#000" stroke="#e0e0e0" stroke-width="1"/></svg>
<svg style="left:25px;top:515px" width="11" height="12"><path d="M2.5 11 V3 H8" fill="none" stroke="#e0e0e0" stroke-width="1.3"/><path d="M0 5 L2.5 2 L5 5 Z M8 0.5 L10.5 3 L8 5.5 Z" fill="#e0e0e0"/><path d="M5 9 H9.5 V4" fill="none" stroke="#e0e0e0" stroke-width="1.3"/><path d="M3 9 L5.5 6.5 V11.5 Z M7 6 L9.5 3.5 L12 6 Z" fill="#e0e0e0"/></svg>
<div class="a" style="left:18px;top:542px;width:20px;height:20px;background:#fff;border:1px solid #2a2a2a"></div>
<div class="a" style="left:8px;top:532px;width:20px;height:20px;background:#fff;border:1px solid #2a2a2a"></div>
<svg style="left:14px;top:572px" width="18" height="14"><rect x="0.6" y="0.6" width="16.8" height="12.8" fill="none" stroke="#e0e0e0" stroke-width="1.2"/><circle cx="9" cy="7" r="3.8" fill="none" stroke="#e0e0e0" stroke-width="1.1" stroke-dasharray="1 1.4"/></svg>
<svg style="left:14px;top:598px" width="23" height="16"><rect x="0.6" y="4.6" width="10.8" height="9.8" fill="none" stroke="#e0e0e0" stroke-width="1.2"/><rect x="5.6" y="0.6" width="11.8" height="9.8" fill="#535353" stroke="#e0e0e0" stroke-width="1.2"/><path d="M22 11 V15 H18 Z" fill="#c8c8c8"/></svg>

<!-- RIGHT ICON STRIP -->
<div class="a" style="left:1296px;top:66px;width:1px;height:866px;background:#3a3a3a"></div>
<div class="a" style="left:1297px;top:66px;width:40px;height:866px;background:#535353;border:1px solid #3a3a3a"></div>
<div class="a" style="left:1298px;top:67px;width:291px;height:12px;background:#424242"></div>
<div class="a" style="left:1297px;top:66px;width:292px;height:1px;background:#3a3a3a"></div>
<svg style="left:1322px;top:70px" width="7" height="5"><path d="M3 0 L0 2.5 L3 5 Z M6.5 0 L3.5 2.5 L6.5 5 Z" fill="#bdbdbd"/></svg>
<svg style="left:1575px;top:70px" width="7" height="5"><path d="M0 0 L3 2.5 L0 5 Z M3.5 0 L6.5 2.5 L3.5 5 Z" fill="#bdbdbd"/></svg>
<div class="a" style="left:1298px;top:78px;width:291px;height:1px;background:#383838"></div>
<!-- group separators -->
<div class="a" style="left:1298px;top:119px;width:38px;height:2px;background:#3a3a3a"></div>
<div class="a" style="left:1298px;top:187px;width:38px;height:2px;background:#3a3a3a"></div>
<div class="a" style="left:1298px;top:228px;width:38px;height:2px;background:#3a3a3a"></div>
<div class="a" style="left:1298px;top:298px;width:38px;height:2px;background:#3a3a3a"></div>
<div class="a" style="left:1298px;top:339px;width:38px;height:2px;background:#3a3a3a"></div>
<div class="a" style="left:1298px;top:380px;width:38px;height:2px;background:#3a3a3a"></div>
<div class="a" style="left:1336px;top:79px;width:2px;height:853px;background:#3a3a3a"></div>
<!-- grips -->
<div class="a" style="left:1307px;top:82px;width:19px;height:3px;background:repeating-linear-gradient(90deg,#474747 0 1px,transparent 1px 2px)"></div>
<div class="a" style="left:1307px;top:123px;width:19px;height:3px;background:repeating-linear-gradient(90deg,#474747 0 1px,transparent 1px 2px)"></div>
<div class="a" style="left:1307px;top:192px;width:19px;height:3px;background:repeating-linear-gradient(90deg,#474747 0 1px,transparent 1px 2px)"></div>
<div class="a" style="left:1307px;top:233px;width:19px;height:3px;background:repeating-linear-gradient(90deg,#474747 0 1px,transparent 1px 2px)"></div>
<div class="a" style="left:1307px;top:303px;width:19px;height:3px;background:repeating-linear-gradient(90deg,#474747 0 1px,transparent 1px 2px)"></div>
<div class="a" style="left:1307px;top:344px;width:19px;height:3px;background:repeating-linear-gradient(90deg,#474747 0 1px,transparent 1px 2px)"></div>
<!-- strip icons -->
<svg style="left:1311px;top:94px" width="16" height="17"><rect x="0.6" y="0.6" width="4.3" height="4.3" fill="none" stroke="#e0e0e0" stroke-width="1.2"/><rect x="0.6" y="6.6" width="4.3" height="4.3" fill="none" stroke="#e0e0e0" stroke-width="1.2"/><rect x="0" y="12" width="5" height="5" fill="#e0e0e0"/><path d="M7.8 0.9 L14 0.9 L7.8 6.3 Z" fill="#e0e0e0"/><path d="M10 3 C15 5 15.5 11 9 15.8 C12.6 11 12.5 6.5 9 5 Z" fill="#e0e0e0"/></svg>
<svg style="left:1309px;top:134px" width="20" height="17"><path d="M0 1h2v1.5H0zM3 1h4v1.5H3zM0 4h2v1.5H0zM3 4h4v1.5H3zM0 7h2v1.5H0zM3 7h4v1.5H3z" fill="#dcdcdc"/><path d="M19 2 L11 10 L13 12 Z" fill="#dcdcdc"/><path d="M10 10.5 C7 10 6 13 4 16 C8 16 12 14 12.5 12.5 Z" fill="#dcdcdc"/></svg>
<svg style="left:1308px;top:163px" width="20" height="16"><rect x="0" y="2" width="19" height="2" fill="#dcdcdc"/><circle cx="5" cy="3" r="3" fill="#dcdcdc"/><rect x="0" y="9" width="19" height="2" fill="#dcdcdc"/><path d="M12 7 L19 7 L19 14 C15 14 12 12 12 10 Z" fill="#dcdcdc"/></svg>
<svg style="left:1309px;top:202px" width="19" height="17"><path d="M0 1h2v1.5H0zM3 1h4v1.5H3zM0 4h2v1.5H0zM3 4h4v1.5H3zM0 7h2v1.5H0zM3 7h4v1.5H3z" fill="#dcdcdc"/><circle cx="12" cy="4" r="3.2" fill="#dcdcdc"/><rect x="11" y="6" width="2" height="4" fill="#dcdcdc"/><rect x="6" y="10" width="12" height="3" fill="#dcdcdc"/><rect x="6" y="14.5" width="12" height="1.5" fill="#dcdcdc"/></svg>
<div class="t" style="left:1310px;top:243px;font-size:17px;line-height:18px;color:#dcdcdc">A</div>
<div class="a" style="left:1324px;top:244px;width:1px;height:17px;background:#dcdcdc"></div>
<svg style="left:1311px;top:273px" width="14" height="16"><path d="M6 0.5 H13 V2 H6 C3 2 1.5 3.8 1.5 5.5 C1.5 7.5 3 9 6 9 Z" fill="#dcdcdc"/><rect x="6" y="0.5" width="2" height="15" fill="#dcdcdc"/><rect x="10.5" y="0.5" width="2" height="15" fill="#dcdcdc"/></svg>
<svg style="left:1307px;top:313px" width="22" height="20"><path d="M5.5 1 A3.6 3.6 0 1 0 7.5 5.8 L12 10" fill="none" stroke="#dcdcdc" stroke-width="2"/><path d="M20.5 2 L11 11" stroke="#dcdcdc" stroke-width="1.5"/><path d="M10.5 11.5 L4 18" stroke="#dcdcdc" stroke-width="4" stroke-linecap="round"/><circle cx="18" cy="12.5" r="2.3" fill="none" stroke="#dcdcdc" stroke-width="1.3"/><path d="M13.5 9.5 L16 11.3" stroke="#dcdcdc" stroke-width="1.2"/></svg>
<svg style="left:1306px;top:354px" width="24" height="18"><ellipse cx="12" cy="9" rx="10.8" ry="8" fill="none" stroke="#c4c4c4" stroke-width="1.6"/><path d="M5 11 C4 7 8 5 10.5 7 C13 3 19 4.5 19 9 C19 12.5 15 13 12.5 10.5 C10.5 13 6 13.5 5 11 Z" fill="#a8a8a8" stroke="#c4c4c4" stroke-width="1"/></svg>
<!-- RIGHT PANELS -->
<div class="a" style="left:1338px;top:79px;width:251px;height:853px;background:#535353"></div>
<div class="a" style="left:1338px;top:79px;width:251px;height:27px;background:#424242"></div>
<div class="a" style="left:1338px;top:79px;width:45px;height:27px;background:#535353"></div>
<div class="t" style="left:1348px;top:86px;font-size:12px;color:#f0f0f0">属性</div>
<svg style="left:1572px;top:88px" width="11" height="9"><path d="M0 0.5h11M0 3h11M0 5.5h11M0 8h11" stroke="#c8c8c8"/></svg>
<div class="a" style="left:1349px;top:113px;width:22px;height:22px;background:#393939;border-radius:3px;border:1px solid #4a4a4a"></div>
<svg style="left:1353px;top:117px" width="14" height="14"><rect x="2" y="2" width="10" height="10" fill="none" stroke="#e0e0e0" stroke-width="1.2"/><circle cx="2" cy="2" r="1.7" fill="#393939" stroke="#e0e0e0"/><circle cx="12" cy="2" r="1.7" fill="#393939" stroke="#e0e0e0"/><circle cx="2" cy="12" r="1.7" fill="#393939" stroke="#e0e0e0"/><circle cx="12" cy="12" r="1.7" fill="#393939" stroke="#e0e0e0"/></svg>
<div class="a" style="left:1375px;top:117px;width:17px;height:13px;background:#e0e0e0"></div>
<div class="a" style="left:1380px;top:120px;width:7px;height:7px;background:#474747;border-radius:50%"></div>
<div class="t" style="left:1401px;top:118px;color:#e0e0e0">实时形状属性</div>
<div class="a" style="left:1338px;top:139px;width:251px;height:2px;background:#424242"></div>
<div class="a" style="left:1572px;top:141px;width:16px;height:337px;background:#4b4b4b"></div>
<!-- section 边框 -->
<svg style="left:1344px;top:150px" width="9" height="6"><path d="M0.5 0.5 L4.5 4.5 L8.5 0.5" stroke="#c8c8c8" fill="none"/></svg>
<div class="t" style="left:1359px;top:147px;font-size:12px;color:#e4e4e4">边框</div>
<div class="a" style="left:1395px;top:153px;width:172px;height:1px;background:#404040"></div>
<div class="lbl" style="left:1345px;top:173px;color:#c8c8c8">W:</div>
<div class="inp" style="left:1367px;top:170px;width:72px;height:19px"></div>
<div class="t" style="left:1369px;top:173px;color:#e8e8e8">980 像素</div>
<svg style="left:1448px;top:175px" width="15" height="8"><rect x="0.7" y="0.7" width="7" height="6.5" rx="3.2" fill="none" stroke="#c8c8c8" stroke-width="1.3"/><rect x="7" y="0.7" width="7" height="6.5" rx="3.2" fill="none" stroke="#c8c8c8" stroke-width="1.3"/><path d="M4 4h7" stroke="#c8c8c8" stroke-width="1.3"/></svg>
<div class="lbl" style="left:1474px;top:173px;color:#c8c8c8">H:</div>
<div class="inp" style="left:1494px;top:170px;width:72px;height:19px"></div>
<div class="t" style="left:1496px;top:173px;color:#e8e8e8">980 像素</div>
<div class="lbl" style="left:1348px;top:204px;color:#c8c8c8">X:</div>
<div class="inp" style="left:1367px;top:201px;width:72px;height:19px"></div>
<div class="t" style="left:1369px;top:204px;color:#e8e8e8">358 像素</div>
<div class="lbl" style="left:1475px;top:204px;color:#c8c8c8">Y:</div>
<div class="inp" style="left:1494px;top:201px;width:72px;height:19px"></div>
<div class="t" style="left:1496px;top:204px;color:#e8e8e8">711 像素</div>
<!-- section 形状细节 -->
<svg style="left:1344px;top:228px" width="9" height="6"><path d="M0.5 0.5 L4.5 4.5 L8.5 0.5" stroke="#c8c8c8" fill="none"/></svg>
<div class="t" style="left:1359px;top:225px;font-size:12px;color:#e4e4e4">形状细节</div>
<div class="a" style="left:1435px;top:231px;width:132px;height:1px;background:#404040"></div>
<div class="a" style="left:1344px;top:243px;width:30px;height:21px;background:#000;border:2px solid #6a6a6a"></div>
<div class="a" style="left:1378px;top:243px;width:30px;height:21px;background:#fff;border:2px solid #6a6a6a"></div>
<svg style="left:1380px;top:245px" width="26" height="17"><path d="M21 2 L6 14" stroke="#e02a2a" stroke-width="1.6"/><rect x="7" y="6.5" width="12" height="3.5" fill="#444"/></svg>
<div class="inp" style="left:1412px;top:243px;width:82px;height:21px"></div>
<div class="a" style="left:1477px;top:244px;width:1px;height:19px;background:#3a3a3a"></div>
<div class="t" style="left:1415px;top:247px;color:#e8e8e8">5 像素</div>
<svg style="left:1482px;top:251px" width="8" height="5"><path d="M0.5 0.5 L4 4 L7.5 0.5" stroke="#c8c8c8" fill="none"/></svg>
<div class="inp" style="left:1498px;top:243px;width:68px;height:21px"></div>
<div class="a" style="left:1503px;top:253px;width:46px;height:2px;background:#e0e0e0"></div>
<svg style="left:1553px;top:251px" width="8" height="5"><path d="M0.5 0.5 L4 4 L7.5 0.5" stroke="#c8c8c8" fill="none"/></svg>
<div class="inp" style="left:1344px;top:272px;width:64px;height:20px"></div>
<svg style="left:1353px;top:276px" width="13" height="13"><rect x="1.5" y="1.5" width="10" height="10" fill="none" stroke="#111" stroke-width="2.4"/><rect x="2.5" y="2.5" width="8" height="8" fill="none" stroke="#e8e8e8" stroke-width="1.6"/></svg>
<svg style="left:1396px;top:280px" width="8" height="5"><path d="M0.5 0.5 L4 4 L7.5 0.5" stroke="#c8c8c8" fill="none"/></svg>
<div class="inp" style="left:1412px;top:272px;width:66px;height:20px"></div>
<svg style="left:1422px;top:277px" width="10" height="11"><rect x="3" y="0" width="6" height="11" fill="#e0e0e0"/><rect x="2" y="4" width="7" height="3" fill="#535353"/><rect x="0" y="4" width="5" height="2.5" fill="#111"/></svg>
<svg style="left:1465px;top:280px" width="8" height="5"><path d="M0.5 0.5 L4 4 L7.5 0.5" stroke="#c8c8c8" fill="none"/></svg>
<div class="inp" style="left:1482px;top:272px;width:84px;height:20px"></div>
<svg style="left:1491px;top:276px" width="13" height="12"><rect x="0" y="0" width="12" height="12" fill="#e0e0e0"/><rect x="6" y="6" width="6" height="6" fill="#474747"/><rect x="4" y="4" width="4" height="3" fill="#111"/><rect x="6" y="6" width="1.5" height="6" fill="#111"/></svg>
<svg style="left:1553px;top:280px" width="8" height="5"><path d="M0.5 0.5 L4 4 L7.5 0.5" stroke="#c8c8c8" fill="none"/></svg>
<!-- section 路径操作 -->
<svg style="left:1344px;top:301px" width="9" height="6"><path d="M0.5 0.5 L4.5 4.5 L8.5 0.5" stroke="#c8c8c8" fill="none"/></svg>
<div class="t" style="left:1359px;top:298px;font-size:12px;color:#e4e4e4">路径操作</div>
<div class="a" style="left:1420px;top:304px;width:147px;height:1px;background:#404040"></div>
<div class="a" style="left:1388px;top:316px;width:133px;height:25px;background:#4a4a4a;border:1px solid #3e3e3e"></div>
<div class="a" style="left:1389px;top:317px;width:32px;height:23px;background:#3c3c3c"></div>
<div class="a" style="left:1421px;top:317px;width:1px;height:23px;background:#3e3e3e"></div>
<div class="a" style="left:1454px;top:317px;width:1px;height:23px;background:#3e3e3e"></div>
<div class="a" style="left:1487px;top:317px;width:1px;height:23px;background:#3e3e3e"></div>
<svg style="left:1398px;top:321px" width="14" height="14"><rect x="0" y="0" width="9" height="9" fill="#e0e0e0"/><rect x="4" y="4" width="9" height="9" fill="#e0e0e0"/></svg>
<svg style="left:1431px;top:321px" width="14" height="14"><rect x="0" y="0" width="9" height="9" fill="#e0e0e0"/><rect x="4.5" y="4.5" width="8" height="8" fill="#4a4a4a" stroke="#e0e0e0"/></svg>
<svg style="left:1464px;top:321px" width="14" height="14"><rect x="0.5" y="0.5" width="8" height="8" fill="none" stroke="#e0e0e0"/><rect x="4.5" y="4.5" width="8" height="8" fill="none" stroke="#e0e0e0"/><rect x="4.5" y="4.5" width="4" height="4" fill="#e0e0e0"/></svg>
<svg style="left:1497px;top:321px" width="14" height="14"><rect x="0" y="0" width="9" height="9" fill="#e0e0e0"/><rect x="4" y="4" width="9" height="9" fill="#e0e0e0"/><rect x="4" y="4" width="5" height="5" fill="#4a4a4a"/></svg>
<!-- watermark logo -->
<svg style="left:1375px;top:410px" width="50" height="50"><circle cx="25.1" cy="25.1" r="24.7" fill="#2a8cf0"/><circle cx="25.1" cy="25.1" r="23.2" fill="#fff"/><circle cx="25.1" cy="25.1" r="21.6" fill="#fff" stroke="#1a1a1a" stroke-width="1.1"/>
<path d="M15.5 12 L16.4 17 M20.3 13.3 L19.8 17.5 M13.6 17.4 L19.5 17.8 L23.5 22 M35.7 12 L34.8 17 M30.9 13.6 L31.4 17.5 M37.6 17.4 L31.7 17.8 L27.7 22" stroke="#111" stroke-width="1.5" fill="none" stroke-linecap="round"/>
<path d="M21.9 20.8 C23.5 20 27.7 20 29.4 20.8 C29.6 25 28.5 30 25.7 32 C22.8 30 21.6 25 21.9 20.8 Z" fill="#111"/></svg>
<div class="t" style="left:1390px;top:443px;font-size:6.5px;line-height:8px;color:#111;font-weight:bold;letter-spacing:0.5px">行鹿志</div>


<!-- LAYERS PANEL -->
<div class="a" style="left:1338px;top:503px;width:251px;height:2px;background:#3a3a3a"></div>
<div class="a" style="left:1338px;top:505px;width:251px;height:28px;background:#424242"></div>
<div class="a" style="left:1372px;top:505px;width:44px;height:28px;background:#535353"></div>
<div class="a" style="left:1416px;top:505px;width:1px;height:28px;background:#3a3a3a"></div>
<div class="a" style="left:1460px;top:505px;width:1px;height:28px;background:#3a3a3a"></div>
<div class="a" style="left:1371px;top:505px;width:1px;height:28px;background:#3a3a3a"></div>
<div class="t" style="left:1346px;top:512px;color:#a8a8a8">3D</div>
<div class="t" style="left:1381px;top:512px;font-size:12px;color:#f0f0f0">图层</div>
<div class="t" style="left:1425px;top:512px;font-size:12px;color:#b8b8b8">通道</div>
<svg style="left:1572px;top:515px" width="11" height="9"><path d="M0 0.5h11M0 3h11M0 5.5h11M0 8h11" stroke="#c8c8c8"/></svg>
<div class="inp" style="left:1341px;top:541px;width:88px;height:21px;border-radius:3px"></div>
<svg style="left:1349px;top:545px" width="11" height="11"><circle cx="6.5" cy="4.5" r="3.6" fill="none" stroke="#e0e0e0" stroke-width="1.4"/><path d="M4 7 L0.8 10.2" stroke="#e0e0e0" stroke-width="1.8"/></svg>
<div class="t" style="left:1365px;top:544px;color:#f0f0f0">类型</div>
<svg style="left:1417px;top:549px" width="8" height="5"><path d="M0.5 0.5 L4 4 L7.5 0.5" stroke="#d0d0d0" fill="none"/></svg>
<svg style="left:1443px;top:546px" width="13" height="11"><rect x="0.7" y="0.7" width="11.6" height="9.6" fill="none" stroke="#dcdcdc" stroke-width="1.3"/><path d="M2.5 8.5 L5 5 L7 7 L8.5 5.5 L10.5 8.5 Z" fill="#dcdcdc"/></svg>
<svg style="left:1468px;top:545px" width="12" height="12"><circle cx="6" cy="6" r="5.2" fill="none" stroke="#dcdcdc" stroke-width="1.4"/><path d="M9.7 2.3 A5.2 5.2 0 0 1 2.3 9.7 Z" fill="#dcdcdc"/></svg>
<div class="t" style="left:1492px;top:543px;font-size:15px;font-weight:bold;font-family:'Liberation Serif',serif;color:#dcdcdc">T</div>
<svg style="left:1517px;top:546px" width="11" height="11"><rect x="1.5" y="1.5" width="8" height="8" fill="none" stroke="#dcdcdc" stroke-width="1.2"/><rect x="0" y="0" width="3" height="3" fill="#dcdcdc"/><rect x="8" y="0" width="3" height="3" fill="#dcdcdc"/><rect x="0" y="8" width="3" height="3" fill="#dcdcdc"/><rect x="8" y="8" width="3" height="3" fill="#dcdcdc"/></svg>
<svg style="left:1541px;top:545px" width="11" height="12"><path d="M3.5 0.6 H8 L10.4 3 V11.4 H3.5 Z" fill="none" stroke="#dcdcdc" stroke-width="1.2"/><rect x="0" y="6" width="6" height="6" fill="#dcdcdc"/></svg>
<div class="a" style="left:1569px;top:543px;width:10px;height:18px;border-radius:5px;background:#454545;border:1px solid #3a3a3a"></div>
<div class="a" style="left:1569px;top:543px;width:10px;height:10px;border-radius:50%;background:#e8e8e8"></div>
<div class="a" style="left:1338px;top:565px;width:251px;height:1px;background:#424242"></div>
<div class="inp" style="left:1341px;top:569px;width:119px;height:20px;border-radius:3px"></div>
<div class="t" style="left:1351px;top:572px;color:#f0f0f0">正常</div>
<svg style="left:1448px;top:577px" width="8" height="5"><path d="M0.5 0.5 L4 4 L7.5 0.5" stroke="#d0d0d0" fill="none"/></svg>
<div class="t" style="left:1467px;top:572px;color:#dcdcdc">不透明度:</div>
<div class="inp" style="left:1523px;top:569px;width:56px;height:20px;border-radius:3px"></div>
<div class="a" style="left:1563px;top:570px;width:1px;height:18px;background:#3a3a3a"></div>
<div class="t" style="left:1526px;top:572px;color:#f0f0f0">100%</div>
<svg style="left:1566px;top:577px" width="8" height="5"><path d="M0.5 0.5 L4 4 L7.5 0.5" stroke="#d0d0d0" fill="none"/></svg>
<div class="a" style="left:1338px;top:592px;width:251px;height:1px;background:#424242"></div>
<div class="t" style="left:1344px;top:599px;color:#dcdcdc">锁定:</div>
<svg style="left:1382px;top:600px" width="11" height="11"><rect width="11" height="11" fill="#9a9a9a"/><path d="M0 0h3v3H0zM6 0h3v3H6zM3 3h3v3H3zM9 3h2v3H9zM0 6h3v3H0zM6 6h3v3H6zM3 9h3v2H3zM9 9h2v2H9z" fill="#5a5a5a"/></svg>
<svg style="left:1403px;top:600px" width="13" height="13"><path d="M12.5 0.5 L6 8 L7.5 9.5 Z" fill="#8a8a8a"/><path d="M5.5 8.5 C3 8.5 2 11 0.5 12.8 C4 12.8 7 12 7 10 Z" fill="#8a8a8a"/></svg>
<svg style="left:1425px;top:599px" width="15" height="15"><path d="M7.5 0 L10 2.7 H8.4 V6.6 H12.3 V5 L15 7.5 L12.3 10 V8.4 H8.4 V12.3 H10 L7.5 15 L5 12.3 H6.6 V8.4 H2.7 V10 L0 7.5 L2.7 5 V6.6 H6.6 V2.7 H5 Z" fill="#e0e0e0"/></svg>
<svg style="left:1447px;top:599px" width="14" height="14"><path d="M3 0 V11 H14 M0 3 H11 V14" fill="none" stroke="#dcdcdc" stroke-width="1.3"/></svg>
<svg style="left:1470px;top:599px" width="11" height="14"><path d="M2.5 6 V4 A3 3 0 0 1 8.5 4 V6" fill="none" stroke="#e0e0e0" stroke-width="1.6"/><rect x="0" y="6" width="11" height="8" fill="#e0e0e0"/><rect x="4.5" y="8.5" width="2" height="3" fill="#535353"/></svg>
<div class="t" style="left:1491px;top:599px;color:#dcdcdc">填充:</div>
<div class="inp" style="left:1523px;top:596px;width:56px;height:20px;border-radius:3px"></div>
<div class="a" style="left:1563px;top:597px;width:1px;height:18px;background:#3a3a3a"></div>
<div class="t" style="left:1526px;top:599px;color:#f0f0f0">100%</div>
<svg style="left:1566px;top:604px" width="8" height="5"><path d="M0.5 0.5 L4 4 L7.5 0.5" stroke="#d0d0d0" fill="none"/></svg>
<div class="a" style="left:1338px;top:619px;width:251px;height:1px;background:#3e3e3e"></div>
<div class="a" style="left:1338px;top:620px;width:235px;height:286px;background:#535353"></div>
<div class="a" style="left:1368px;top:620px;width:1px;height:286px;background:#474747"></div>
<div class="a" style="left:1369px;top:621px;width:194px;height:39px;background:#6a6a6a"></div>
<div class="a" style="left:1563px;top:621px;width:10px;height:39px;background:#5e5e5e"></div>
<svg style="left:1347px;top:636px" width="14" height="9"><path d="M0.5 4.5 C3 0.5 11 0.5 13.5 4.5 C11 8.5 3 8.5 0.5 4.5 Z" fill="#dcdcdc"/><circle cx="7" cy="4.5" r="2.6" fill="#474747"/><circle cx="7.8" cy="3.6" r="0.7" fill="#dcdcdc"/></svg>
<svg style="left:1372px;top:624px" width="24" height="32"><defs><pattern id="ck0" x="1" y="1" width="8" height="8" patternUnits="userSpaceOnUse"><rect width="8" height="8" fill="#fff"/><rect width="4" height="4" fill="#cdcdcd"/><rect x="4" y="4" width="4" height="4" fill="#cdcdcd"/></pattern><clipPath id="cp0"><path d="M1 1 H23 V19 H11 V31 H1 Z"/></clipPath></defs><path d="M0.5 0.5 H23.5 V19.5 H11.5 V31.5 H0.5 Z" fill="#2a2a2a"/><g clip-path="url(#cp0)"><rect width="24" height="32" fill="url(#ck0)"/><circle cx="18.2" cy="25.5" r="9.8" fill="#000"/></g></svg>
<svg style="left:1384px;top:644px" width="12" height="12"><rect x="1.5" y="1.5" width="8" height="8" fill="none" stroke="#e8e8e8" stroke-width="1.1"/><circle cx="1.5" cy="1.5" r="1.3" fill="#6a6a6a" stroke="#e8e8e8" stroke-width="1"/><circle cx="9.5" cy="1.5" r="1.3" fill="#6a6a6a" stroke="#e8e8e8" stroke-width="1"/><circle cx="1.5" cy="9.5" r="1.3" fill="#6a6a6a" stroke="#e8e8e8" stroke-width="1"/><circle cx="9.5" cy="9.5" r="1.3" fill="#6a6a6a" stroke="#e8e8e8" stroke-width="1"/></svg>
<svg style="left:1370px;top:622px" width="28" height="36"><path d="M0.75 11 V0.75 H9 M19 0.75 H27.25 V11 M0.75 25 V35.25 H9 M19 35.25 H27.25 V25" fill="none" stroke="#f0f0f0" stroke-width="1.5"/></svg>
<div class="t" style="left:1406px;top:634px;color:#e8e8e8">椭圆 1 拷贝 2</div>
<svg style="left:1546px;top:634px" width="13" height="13"><path d="M1.5 12 L3.6 3.5 C4 1.8 5 1.2 6.5 1.4 M0.8 4.6 H5.6" fill="none" stroke="#dcdcdc" stroke-width="1.4" stroke-linecap="round"/><path d="M5.5 9.7 L11 3.5 M6.6 3.6 L9.7 9.7" fill="none" stroke="#dcdcdc" stroke-width="1.4" stroke-linecap="round"/></svg>
<svg style="left:1563px;top:638px" width="8" height="5"><path d="M0.5 4.5 L4 1 L7.5 4.5" stroke="#c8c8c8" fill="none"/></svg>
<svg style="left:1388px;top:665px" width="14" height="9"><path d="M0.5 4.5 C3 0.5 11 0.5 13.5 4.5 C11 8.5 3 8.5 0.5 4.5 Z" fill="#dcdcdc"/><circle cx="7" cy="4.5" r="2.6" fill="#474747"/><circle cx="7.8" cy="3.6" r="0.7" fill="#dcdcdc"/></svg>
<div class="t" style="left:1406px;top:662px;color:#e8e8e8">效果</div>
<svg style="left:1405px;top:684px" width="14" height="9"><path d="M0.5 4.5 C3 0.5 11 0.5 13.5 4.5 C11 8.5 3 8.5 0.5 4.5 Z" fill="#dcdcdc"/><circle cx="7" cy="4.5" r="2.6" fill="#474747"/><circle cx="7.8" cy="3.6" r="0.7" fill="#dcdcdc"/></svg>
<div class="t" style="left:1424px;top:681px;color:#e8e8e8">渐变叠加</div>
<div class="a" style="left:1338px;top:697px;width:235px;height:1px;background:#424242"></div>
<div class="a" style="left:1563px;top:698px;width:10px;height:39px;background:#484848"></div>
<svg style="left:1347px;top:713px" width="14" height="9"><path d="M0.5 4.5 C3 0.5 11 0.5 13.5 4.5 C11 8.5 3 8.5 0.5 4.5 Z" fill="#dcdcdc"/><circle cx="7" cy="4.5" r="2.6" fill="#474747"/><circle cx="7.8" cy="3.6" r="0.7" fill="#dcdcdc"/></svg>
<svg style="left:1372px;top:701px" width="24" height="32"><defs><pattern id="ck1" x="1" y="1" width="8" height="8" patternUnits="userSpaceOnUse"><rect width="8" height="8" fill="#fff"/><rect width="4" height="4" fill="#cdcdcd"/><rect x="4" y="4" width="4" height="4" fill="#cdcdcd"/></pattern><clipPath id="cp1"><path d="M1 1 H23 V19 H11 V31 H1 Z"/></clipPath></defs><path d="M0.5 0.5 H23.5 V19.5 H11.5 V31.5 H0.5 Z" fill="#2a2a2a"/><g clip-path="url(#cp1)"><rect width="24" height="32" fill="url(#ck1)"/><circle cx="6.75" cy="25.5" r="9.8" fill="#000"/></g></svg>
<svg style="left:1384px;top:721px" width="12" height="12"><rect x="1.5" y="1.5" width="8" height="8" fill="none" stroke="#e8e8e8" stroke-width="1.1"/><circle cx="1.5" cy="1.5" r="1.3" fill="#535353" stroke="#e8e8e8" stroke-width="1"/><circle cx="9.5" cy="1.5" r="1.3" fill="#535353" stroke="#e8e8e8" stroke-width="1"/><circle cx="1.5" cy="9.5" r="1.3" fill="#535353" stroke="#e8e8e8" stroke-width="1"/><circle cx="9.5" cy="9.5" r="1.3" fill="#535353" stroke="#e8e8e8" stroke-width="1"/></svg>
<div class="t" style="left:1406px;top:711px;color:#e8e8e8">椭圆 1 拷贝 2</div>
<svg style="left:1546px;top:711px" width="13" height="13"><path d="M1.5 12 L3.6 3.5 C4 1.8 5 1.2 6.5 1.4 M0.8 4.6 H5.6" fill="none" stroke="#dcdcdc" stroke-width="1.4" stroke-linecap="round"/><path d="M5.5 9.7 L11 3.5 M6.6 3.6 L9.7 9.7" fill="none" stroke="#dcdcdc" stroke-width="1.4" stroke-linecap="round"/></svg>
<svg style="left:1563px;top:715px" width="8" height="5"><path d="M0.5 4.5 L4 1 L7.5 4.5" stroke="#c8c8c8" fill="none"/></svg>
<svg style="left:1388px;top:742px" width="14" height="9"><path d="M0.5 4.5 C3 0.5 11 0.5 13.5 4.5 C11 8.5 3 8.5 0.5 4.5 Z" fill="#dcdcdc"/><circle cx="7" cy="4.5" r="2.6" fill="#474747"/><circle cx="7.8" cy="3.6" r="0.7" fill="#dcdcdc"/></svg>
<div class="t" style="left:1406px;top:739px;color:#e8e8e8">效果</div>
<svg style="left:1405px;top:761px" width="14" height="9"><path d="M0.5 4.5 C3 0.5 11 0.5 13.5 4.5 C11 8.5 3 8.5 0.5 4.5 Z" fill="#dcdcdc"/><circle cx="7" cy="4.5" r="2.6" fill="#474747"/><circle cx="7.8" cy="3.6" r="0.7" fill="#dcdcdc"/></svg>
<div class="t" style="left:1424px;top:758px;color:#e8e8e8">渐变叠加</div>
<div class="a" style="left:1338px;top:774px;width:235px;height:1px;background:#424242"></div>
<div class="a" style="left:1563px;top:775px;width:10px;height:39px;background:#484848"></div>
<svg style="left:1347px;top:790px" width="14" height="9"><path d="M0.5 4.5 C3 0.5 11 0.5 13.5 4.5 C11 8.5 3 8.5 0.5 4.5 Z" fill="#dcdcdc"/><circle cx="7" cy="4.5" r="2.6" fill="#474747"/><circle cx="7.8" cy="3.6" r="0.7" fill="#dcdcdc"/></svg>
<svg style="left:1372px;top:778px" width="24" height="32"><defs><pattern id="ck2" x="1" y="1" width="8" height="8" patternUnits="userSpaceOnUse"><rect width="8" height="8" fill="#fff"/><rect width="4" height="4" fill="#cdcdcd"/><rect x="4" y="4" width="4" height="4" fill="#cdcdcd"/></pattern><clipPath id="cp2"><path d="M1 1 H23 V19 H11 V31 H1 Z"/></clipPath></defs><path d="M0.5 0.5 H23.5 V19.5 H11.5 V31.5 H0.5 Z" fill="#2a2a2a"/><g clip-path="url(#cp2)"><rect width="24" height="32" fill="url(#ck2)"/><circle cx="18.2" cy="9.1" r="9.8" fill="#000"/></g></svg>
<svg style="left:1384px;top:798px" width="12" height="12"><rect x="1.5" y="1.5" width="8" height="8" fill="none" stroke="#e8e8e8" stroke-width="1.1"/><circle cx="1.5" cy="1.5" r="1.3" fill="#535353" stroke="#e8e8e8" stroke-width="1"/><circle cx="9.5" cy="1.5" r="1.3" fill="#535353" stroke="#e8e8e8" stroke-width="1"/><circle cx="1.5" cy="9.5" r="1.3" fill="#535353" stroke="#e8e8e8" stroke-width="1"/><circle cx="9.5" cy="9.5" r="1.3" fill="#535353" stroke="#e8e8e8" stroke-width="1"/></svg>
<div class="t" style="left:1406px;top:788px;color:#e8e8e8">椭圆 1 拷贝</div>
<svg style="left:1546px;top:788px" width="13" height="13"><path d="M1.5 12 L3.6 3.5 C4 1.8 5 1.2 6.5 1.4 M0.8 4.6 H5.6" fill="none" stroke="#dcdcdc" stroke-width="1.4" stroke-linecap="round"/><path d="M5.5 9.7 L11 3.5 M6.6 3.6 L9.7 9.7" fill="none" stroke="#dcdcdc" stroke-width="1.4" stroke-linecap="round"/></svg>
<svg style="left:1563px;top:792px" width="8" height="5"><path d="M0.5 4.5 L4 1 L7.5 4.5" stroke="#c8c8c8" fill="none"/></svg>
<svg style="left:1388px;top:819px" width="14" height="9"><path d="M0.5 4.5 C3 0.5 11 0.5 13.5 4.5 C11 8.5 3 8.5 0.5 4.5 Z" fill="#dcdcdc"/><circle cx="7" cy="4.5" r="2.6" fill="#474747"/><circle cx="7.8" cy="3.6" r="0.7" fill="#dcdcdc"/></svg>
<div class="t" style="left:1406px;top:816px;color:#e8e8e8">效果</div>
<svg style="left:1405px;top:838px" width="14" height="9"><path d="M0.5 4.5 C3 0.5 11 0.5 13.5 4.5 C11 8.5 3 8.5 0.5 4.5 Z" fill="#dcdcdc"/><circle cx="7" cy="4.5" r="2.6" fill="#474747"/><circle cx="7.8" cy="3.6" r="0.7" fill="#dcdcdc"/></svg>
<div class="t" style="left:1424px;top:835px;color:#e8e8e8">渐变叠加</div>
<div class="a" style="left:1338px;top:851px;width:235px;height:1px;background:#424242"></div>
<div class="a" style="left:1563px;top:852px;width:10px;height:39px;background:#484848"></div>
<svg style="left:1347px;top:867px" width="14" height="9"><path d="M0.5 4.5 C3 0.5 11 0.5 13.5 4.5 C11 8.5 3 8.5 0.5 4.5 Z" fill="#dcdcdc"/><circle cx="7" cy="4.5" r="2.6" fill="#474747"/><circle cx="7.8" cy="3.6" r="0.7" fill="#dcdcdc"/></svg>
<svg style="left:1372px;top:855px" width="24" height="32"><defs><pattern id="ck3" x="1" y="1" width="8" height="8" patternUnits="userSpaceOnUse"><rect width="8" height="8" fill="#fff"/><rect width="4" height="4" fill="#cdcdcd"/><rect x="4" y="4" width="4" height="4" fill="#cdcdcd"/></pattern><clipPath id="cp3"><path d="M1 1 H23 V19 H11 V31 H1 Z"/></clipPath></defs><path d="M0.5 0.5 H23.5 V19.5 H11.5 V31.5 H0.5 Z" fill="#2a2a2a"/><g clip-path="url(#cp3)"><rect width="24" height="32" fill="url(#ck3)"/><circle cx="6.75" cy="9.1" r="9.8" fill="#000"/></g></svg>
<svg style="left:1384px;top:875px" width="12" height="12"><rect x="1.5" y="1.5" width="8" height="8" fill="none" stroke="#e8e8e8" stroke-width="1.1"/><circle cx="1.5" cy="1.5" r="1.3" fill="#535353" stroke="#e8e8e8" stroke-width="1"/><circle cx="9.5" cy="1.5" r="1.3" fill="#535353" stroke="#e8e8e8" stroke-width="1"/><circle cx="1.5" cy="9.5" r="1.3" fill="#535353" stroke="#e8e8e8" stroke-width="1"/><circle cx="9.5" cy="9.5" r="1.3" fill="#535353" stroke="#e8e8e8" stroke-width="1"/></svg>
<div class="t" style="left:1406px;top:865px;color:#e8e8e8">椭圆 1</div>
<svg style="left:1546px;top:865px" width="13" height="13"><path d="M1.5 12 L3.6 3.5 C4 1.8 5 1.2 6.5 1.4 M0.8 4.6 H5.6" fill="none" stroke="#dcdcdc" stroke-width="1.4" stroke-linecap="round"/><path d="M5.5 9.7 L11 3.5 M6.6 3.6 L9.7 9.7" fill="none" stroke="#dcdcdc" stroke-width="1.4" stroke-linecap="round"/></svg>
<svg style="left:1563px;top:869px" width="8" height="5"><path d="M0.5 4.5 L4 1 L7.5 4.5" stroke="#c8c8c8" fill="none"/></svg>
<svg style="left:1388px;top:896px" width="14" height="9"><path d="M0.5 4.5 C3 0.5 11 0.5 13.5 4.5 C11 8.5 3 8.5 0.5 4.5 Z" fill="#dcdcdc"/><circle cx="7" cy="4.5" r="2.6" fill="#474747"/><circle cx="7.8" cy="3.6" r="0.7" fill="#dcdcdc"/></svg>
<div class="t" style="left:1406px;top:893px;color:#e8e8e8">效果</div>
<div class="a" style="left:1573px;top:620px;width:16px;height:286px;background:#4b4b4b"></div>
<svg style="left:1577px;top:629px" width="9" height="5"><path d="M0.5 4.5 L4.5 0.5 L8.5 4.5" stroke="#7a7a7a" fill="none"/></svg>
<div class="a" style="left:1575px;top:637px;width:11px;height:206px;background:#5e5e5e"></div>
<svg style="left:1577px;top:893px" width="9" height="5"><path d="M0.5 0.5 L4.5 4.5 L8.5 0.5" stroke="#7a7a7a" fill="none"/></svg>
<div class="a" style="left:1338px;top:905px;width:251px;height:1px;background:#3e3e3e"></div>
<svg style="left:1384px;top:914px" width="15" height="8"><rect x="0.7" y="0.7" width="7" height="6.5" rx="3.2" fill="none" stroke="#8a8a8a" stroke-width="1.3"/><rect x="7" y="0.7" width="7" height="6.5" rx="3.2" fill="none" stroke="#8a8a8a" stroke-width="1.3"/><path d="M4 4h7" stroke="#8a8a8a" stroke-width="1.3"/></svg>
<svg style="left:1413px;top:911px" width="14" height="15"><path d="M1.5 14 L4 4 C4.5 2 5.6 1.3 7.3 1.5 M0.8 5.3 H6.3" fill="none" stroke="#dcdcdc" stroke-width="1.5" stroke-linecap="round"/><path d="M6 11.2 L12.3 4.2 M7.3 4.2 L10.8 11.2" fill="none" stroke="#dcdcdc" stroke-width="1.5" stroke-linecap="round"/></svg>
<svg style="left:1427px;top:926px" width="5" height="3"><path d="M0 0 H5 L2.5 3 Z" fill="#dcdcdc"/></svg>
<svg style="left:1439px;top:913px" width="13" height="11"><rect width="13" height="11" fill="#dcdcdc"/><circle cx="6.5" cy="5.5" r="3" fill="#535353"/></svg>
<svg style="left:1467px;top:912px" width="12" height="12"><circle cx="6" cy="6" r="5.2" fill="none" stroke="#dcdcdc" stroke-width="1.4"/><path d="M9.7 2.3 A5.2 5.2 0 0 1 2.3 9.7 Z" fill="#dcdcdc"/></svg>
<svg style="left:1481px;top:926px" width="5" height="3"><path d="M0 0 H5 L2.5 3 Z" fill="#dcdcdc"/></svg>
<svg style="left:1494px;top:912px" width="12" height="11"><path d="M0 0 H5 L6 2 H12 V11 H0 Z" fill="#dcdcdc"/><path d="M0 2.5 H12" stroke="#535353" stroke-width="0.8"/></svg>
<svg style="left:1521px;top:912px" width="12" height="12"><path d="M0.7 0.7 H11.3 V11.3 H5 L0.7 7 Z" fill="none" stroke="#dcdcdc" stroke-width="1.3"/><path d="M0.7 7 H5 V11.3 Z" fill="#dcdcdc"/></svg>
<svg style="left:1548px;top:911px" width="11" height="14"><path d="M0 2.5 H11 M3.5 2.5 V0.7 H7.5 V2.5" fill="none" stroke="#dcdcdc" stroke-width="1.2"/><path d="M1.5 4 H9.5 V13.3 H1.5 Z" fill="none" stroke="#dcdcdc" stroke-width="1.3"/><path d="M4 5.5 V12 M7 5.5 V12" stroke="#dcdcdc" stroke-width="1.1"/></svg>
</body></html>
